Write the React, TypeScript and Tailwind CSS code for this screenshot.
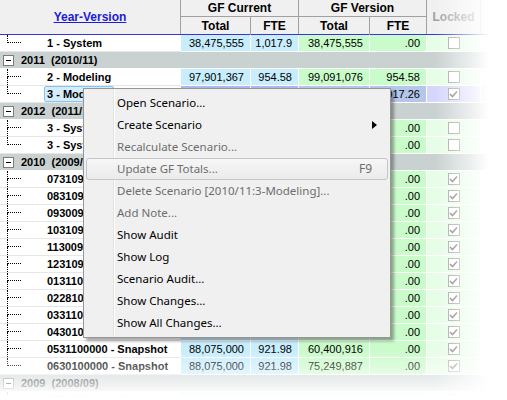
import React from "react";

// ---------------------------------------------------------------------------
// Types / data
// ---------------------------------------------------------------------------

type Item = {
  kind: "item";
  name: string;
  cur: string;
  curFte: string;
  ver: string;
  verFte: string;
  locked: boolean;
  last?: boolean;
  selected?: boolean;
};
type Group = { kind: "group"; label: string };
type Row = Item | Group;

const snap = (name: string, last = false): Item => ({
  kind: "item",
  name,
  cur: "88,075,000",
  curFte: "921.98",
  ver: "60,400,916",
  verFte: ".00",
  locked: true,
  last,
});

const ROWS: Row[] = [
  { kind: "item", name: "1 - System", cur: "38,475,555", curFte: "1,017.9", ver: "38,475,555", verFte: ".00", locked: false, last: true },
  { kind: "group", label: "2011  (2010/11)" },
  { kind: "item", name: "2 - Modeling", cur: "97,901,367", curFte: "954.58", ver: "99,091,076", verFte: "954.58", locked: false },
  { kind: "item", name: "3 - Modeling", cur: "99,091,076", curFte: "1,017.26", ver: "99,091,076", verFte: "1,017.26", locked: true, last: true, selected: true },
  { kind: "group", label: "2012  (2011/12)" },
  { kind: "item", name: "3 - System", cur: "101,220,447", curFte: "1,017.26", ver: "101,220,447", verFte: ".00", locked: false },
  { kind: "item", name: "3 - System", cur: "101,220,447", curFte: "1,017.26", ver: "101,220,447", verFte: ".00", locked: false, last: true },
  { kind: "group", label: "2010  (2009/10)" },
  snap("0731090000 - Snapshot"),
  snap("0831090000 - Snapshot"),
  snap("0930090000 - Snapshot"),
  snap("1031090000 - Snapshot"),
  snap("1130090000 - Snapshot"),
  snap("1231090000 - Snapshot"),
  snap("0131100000 - Snapshot"),
  snap("0228100000 - Snapshot"),
  snap("0331100000 - Snapshot"),
  snap("0430100000 - Snapshot"),
  snap("0531100000 - Snapshot"),
  { ...snap("0630100000 - Snapshot", true), ver: "75,249,887" },
  { kind: "group", label: "2009  (2008/09)" },
  { kind: "item", name: "0731080000 - Snapshot", cur: "111,396,000", curFte: "1,002.40", ver: "8,447,688", verFte: ".00", locked: true },
];

const MENU = [
  { label: "Open Scenario..." },
  { label: "Create Scenario", sub: true },
  { label: "Recalculate Scenario...", disabled: true },
  { label: "Update GF Totals...", disabled: true, hot: true, key: "F9" },
  { label: "Delete Scenario [2010/11:3-Modeling]...", disabled: true },
  { label: "Add Note...", disabled: true },
  { label: "Show Audit" },
  { label: "Show Log" },
  { label: "Scenario Audit..." },
  { label: "Show Changes..." },
  { label: "Show All Changes..." },
];

// ---------------------------------------------------------------------------
// Bits
// ---------------------------------------------------------------------------

function Check({ on }: { on: boolean }) {
  return (
    <span className="flex h-[12px] w-[12px] items-center justify-center border border-[#a2a2a2] bg-white">
      {on && (
        <svg width="9" height="8" viewBox="0 0 9 8">
          <path d="M1 4 L3.5 6.5 L8 1.5" fill="none" stroke="#7a7a7a" strokeWidth="1.6" />
        </svg>
      )}
    </span>
  );
}

function Tree({ last }: { last?: boolean }) {
  return (
    <div className="flex h-full w-[22px] shrink-0 flex-col pl-[7px]">
      <div className="h-[8px] w-[14px] border-b border-l border-dotted border-black" />
      <div className={`flex-1 ${last ? "" : "border-l border-dotted border-black"}`} />
    </div>
  );
}

function Num({ v, className }: { v: string; className: string }) {
  return (
    <div className={`flex h-full items-center justify-end border-r border-white pr-[6px] ${className}`}>{v}</div>
  );
}

function ItemRow({ r }: { r: Item }) {
  const sel = r.selected;
  return (
    <div className="flex h-[17px] text-[11px] text-black">
      <div className="flex h-full w-[181px] shrink-0 items-stretch border-b border-[#e6e6e6]">
        <Tree last={r.last} />
        <div className="flex items-center pl-[22px]">
          <span
            className={`whitespace-pre px-[2px] font-bold leading-[14px] ${
              sel ? "rounded-[2px] border border-[#84c4f0] bg-[#d4ecfc]" : "border border-transparent"
            }`}
          >
            {r.name}
          </span>
        </div>
      </div>
      <Num v={r.cur} className={`w-[70px] border-b ${sel ? "bg-[#adb6f2]" : "bg-[#c8edfc]"}`} />
      <Num v={r.curFte} className={`w-[48px] border-b ${sel ? "bg-[#adb6f2]" : "bg-[#c8edfc]"}`} />
      <Num v={r.ver} className={`w-[71px] border-b ${sel ? "bg-[#b4c6ea]" : "bg-[#cafbca]"}`} />
      <Num v={r.verFte} className={`w-[57px] border-b ${sel ? "bg-[#b4c6ea]" : "bg-[#cafbca]"}`} />
      <div
        className={`flex h-full w-[54px] items-center justify-center border-b border-r border-white ${
          sel ? "bg-[#d6d6fc]" : "bg-[#e6fde6]"
        }`}
      >
        <Check on={r.locked} />
      </div>
      <div className={`h-full flex-1 border-b border-white ${sel ? "bg-[#e4e4fc]" : "bg-[#f0fef0]"}`} />
    </div>
  );
}

function GroupRow({ label }: { label: string }) {
  return (
    <div className="flex h-[17px] items-center border-b border-white bg-[#c9d1d1] text-[11px] text-black">
      <span className="ml-[3px] flex h-[11px] w-[11px] items-center justify-center border border-[#7c7c7c] bg-white">
        <span className="h-px w-[5px] bg-black" />
      </span>
      <span className="ml-[7px] whitespace-pre font-bold">{label}</span>
    </div>
  );
}

function ContextMenu() {
  return (
    <div
      className="absolute left-[83px] top-[88px] flex w-[308px] border border-[#979797] bg-[#f0f0f0] py-[3px] shadow-[3px_3px_3px_rgba(0,0,0,0.35)]"
      style={{ fontFamily: '"Noto Sans", "Open Sans", sans-serif' }}
    >
      <div className="relative flex-1">
        <div className="absolute bottom-[-3px] left-[29px] top-[-3px] w-[2px] border-l border-[#e2e3e3] bg-white" />
        {MENU.map((m) => (
          <div
            key={m.label}
            className={`relative mx-[2px] flex h-[22px] items-center rounded-[3px] border pl-[30px] pr-[15px] text-[11.5px] ${
              m.hot
                ? "border-[#c6c6c6] bg-gradient-to-b from-[#f6f6f6] to-[#ebebeb]"
                : "border-transparent"
            } ${m.disabled ? "text-[#6d6d6d]" : "text-black"}`}
          >
            <span className="flex-1 whitespace-pre">{m.label}</span>
            {m.key && <span className="text-[12px]">{m.key}</span>}
            {m.sub && (
              <svg width="5" height="8" viewBox="0 0 5 8" className="mr-[-5px]">
                <path d="M0 0 L5 4 L0 8 Z" fill="#000" />
              </svg>
            )}
          </div>
        ))}
      </div>
    </div>
  );
}

// ---------------------------------------------------------------------------
// Page
// ---------------------------------------------------------------------------

export default function App() {
  return (
    <div
      className="relative h-[400px] w-[507px] overflow-hidden bg-white"
      style={{ fontFamily: '"Liberation Sans", Arial, sans-serif' }}
    >
      {/* header */}
      <div className="flex h-[35px] border-b border-[#3535d8] bg-[#f0f0f0] text-[12px] font-bold">
        <div className="flex w-[181px] items-center justify-center border-r border-[#a0a0a0]">
          <span className="text-[#1c1cd8] underline">Year-Version</span>
        </div>
        <div className="flex w-[118px] flex-col border-r border-[#a0a0a0]">
          <div className="flex h-[17px] items-center justify-center border-b border-[#a0a0a0]">GF Current</div>
          <div className="flex flex-1">
            <div className="flex w-[70px] items-center justify-center border-r border-[#a0a0a0]">Total</div>
            <div className="flex flex-1 items-center justify-center">FTE</div>
          </div>
        </div>
        <div className="flex w-[128px] flex-col border-r border-[#a0a0a0]">
          <div className="flex h-[17px] items-center justify-center border-b border-[#a0a0a0]">GF Version</div>
          <div className="flex flex-1">
            <div className="flex w-[71px] items-center justify-center border-r border-[#a0a0a0]">Total</div>
            <div className="flex flex-1 items-center justify-center">FTE</div>
          </div>
        </div>
        <div className="flex w-[54px] items-center justify-center border-r border-[#c8c8c8] text-[#a0a0a0]">
          Locked
        </div>
        <div className="flex-1" />
      </div>

      {/* rows */}
      <div className="flex flex-col">
        {ROWS.map((r, i) =>
          r.kind === "group" ? <GroupRow key={i} label={r.label} /> : <ItemRow key={i} r={r} />
        )}
      </div>

      {/* fade to white, right and bottom */}
      <div className="pointer-events-none absolute right-0 top-0 h-full w-[72px] bg-[linear-gradient(to_right,rgba(255,255,255,0),#fff_75%)]" />
      <div className="pointer-events-none absolute bottom-0 left-0 h-[50px] w-full bg-[linear-gradient(to_bottom,rgba(255,255,255,0),#fff_95%)]" />

      <ContextMenu />
    </div>
  );
}
